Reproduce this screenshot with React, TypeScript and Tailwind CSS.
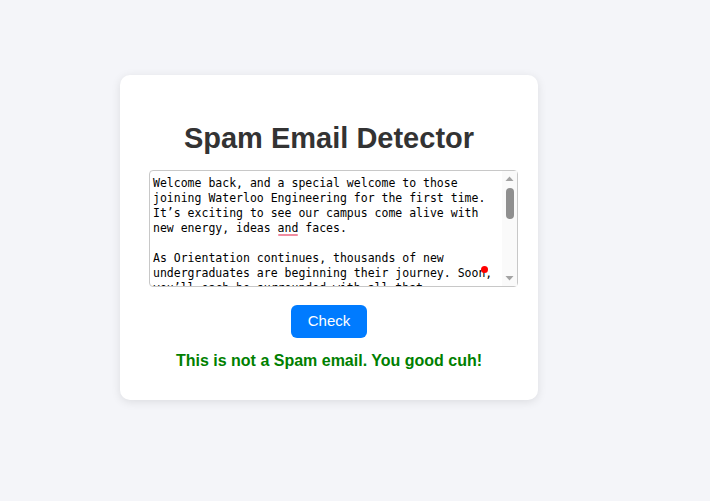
import React from "react";

const TEXT = `Welcome back, and a special welcome to those joining Waterloo Engineering for the first time. It’s exciting to see our campus come alive with new energy, ideas and faces.

As Orientation continues, thousands of new undergraduates are beginning their journey. Soon, you’ll each be surrounded with all that Engineering at Waterloo has to offer, and people who will challenge and inspire you every day.

Whether you are returning or arriving, we are glad you are here.`;

export default function App() {
  return (
    <div className="min-h-[501px] w-full bg-[#f4f5f9] pt-[75px] pl-[120px]" style={{ fontFamily: '"Liberation Sans", Arial, sans-serif' }}>
      <div className="w-[418px] h-[325px] rounded-[10px] bg-white shadow-[0_2px_10px_rgba(0,0,0,0.1)] flex flex-col items-start">
        <h1 className="w-full text-center text-[29px] leading-[32px] font-bold text-[#333] mt-[47px]">
          Spam Email Detector
        </h1>
        <div className="relative ml-[29px] mt-[16px]">
          <textarea
            spellCheck={false}
            defaultValue={TEXT}
            className="block w-[369px] h-[117px] resize-none overflow-hidden border border-[#c8c8c8] rounded-[4px] pl-[3px] pr-[17px] py-[5px] text-[11.5px] leading-[15px] text-black outline-none bg-white"
            style={{ fontFamily: '"DejaVu Sans Mono", "Liberation Mono", monospace' }}
          />
          <div className="absolute left-[129px] top-[64px] w-[20px] h-[2px] bg-[#f08ca0] rounded-full" />
          <div className="absolute left-[332px] top-[96px] w-[7px] h-[7px] bg-[#ff0000] rounded-full" />
          <div className="absolute right-[1px] top-[1px] bottom-[1px] w-[15px] bg-[#fafafa] flex flex-col items-center">
            <svg width="15" height="15" viewBox="0 0 15 15" className="shrink-0">
              <polygon points="3.5,10 7.5,5.5 11.5,10" fill="#a3a3a3" />
            </svg>
            <div className="w-[8px] h-[31px] rounded-full bg-[#8f8f8f] mt-[2px]" />
            <div className="flex-1" />
            <svg width="15" height="15" viewBox="0 0 15 15" className="shrink-0">
              <polygon points="3.5,5 7.5,9.5 11.5,5" fill="#a3a3a3" />
            </svg>
          </div>
        </div>
        <div className="w-full flex justify-center mt-[18px]">
          <button className="w-[76px] h-[33px] rounded-[6px] bg-[#007bff] text-white text-[15px]">
            Check
          </button>
        </div>
        <p className="w-full text-center text-[16px] leading-[18px] font-bold text-[#008000] mt-[14px]">
          This is not a Spam email. You good cuh!
        </p>
      </div>
    </div>
  );
}
